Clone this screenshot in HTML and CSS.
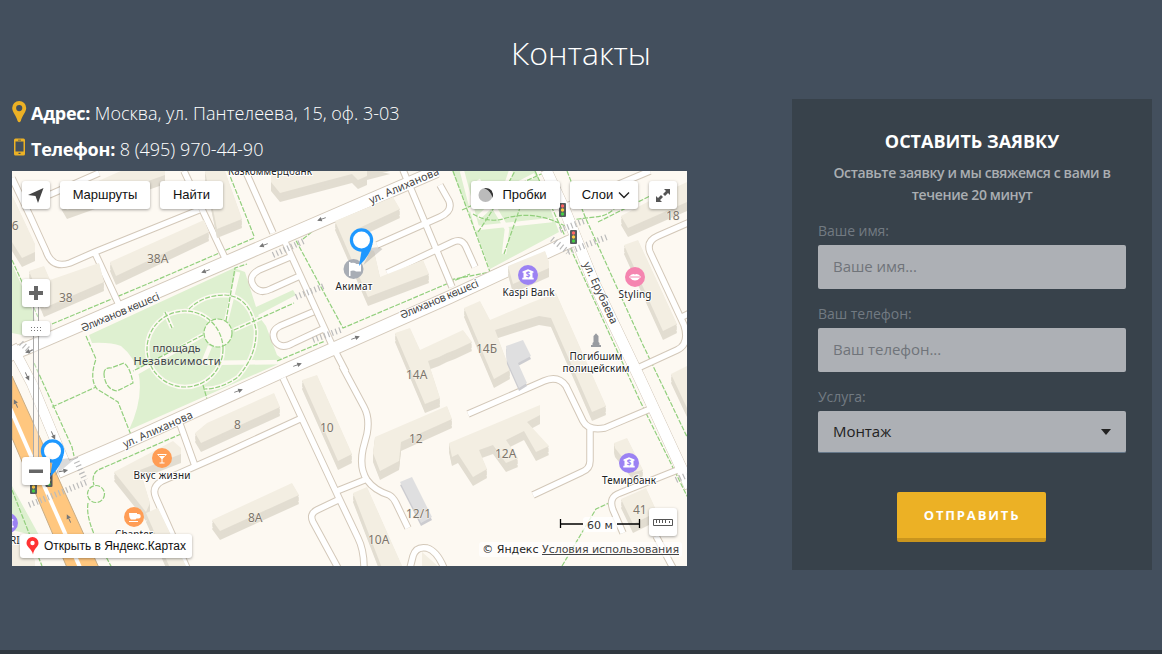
FILE: index.html
```html
<!DOCTYPE html>
<html lang="ru">
<head>
<meta charset="utf-8">
<title>Контакты</title>
<link rel="stylesheet" href="styles.css">
</head>
<body>
<section class="contacts">
  <h2 class="title">Контакты</h2>
  <div class="columns">
    <div class="info">
      <p class="line"><svg class="line-icon" viewBox="0 0 15 22" width="15" height="22"><path fill="#ecb125" fill-rule="evenodd" d="M7.200 0a7 7 0 0 1 7 7c0 4-4 7.500-5.400 13q-1.600 2.500-3.200 0C4.200 14.500.2 11 .2 7a7 7 0 0 1 7-7zm0 4a3.100 3.100 0 1 0 0 6.200 3.100 3.100 0 0 0 0-6.200z"/></svg><span><b>Адрес:</b> Москва, ул. Пантелеева, 15, оф. 3-03</span></p>
      <p class="line"><svg class="line-icon" viewBox="0 0 15 22" width="15" height="22"><path fill="#ecb125" fill-rule="evenodd" d="M3.500 1.500h8a1.500 1.500 0 0 1 1.500 1.500v14a1.500 1.500 0 0 1-1.500 1.500h-8A1.500 1.500 0 0 1 2 17V3A1.500 1.500 0 0 1 3.500 1.500zM3.500 4.500v10h8v-10zM6 2.800h3v.7H6zM6.500 15.700V17h2v-1.300z"/></svg><span><b>Телефон:</b> 8 (495) 970-44-90</span></p>
      <div class="map">
        <svg class="map-canvas" viewBox="12 171 675 395" width="675" height="395">
          <defs>
            <g id="bank"><circle r="10" fill="#9b82f3"/><path fill="#fff" d="M-5.500-3.500L0-5.800l5.500 2.300v1.300h-1v5h1.200v1.800H-5.700V2.800h1.200v-5h-1z"/><text y="3.200" class="dollar">$</text></g>
            <g id="light"><rect x="-3.500" y="-7" width="7" height="14" rx="1" fill="#555b5e"/><circle cy="-4" r="1.700" fill="#f66"/><circle r="1.700" fill="#fc4"/><circle cy="4" r="1.700" fill="#4c4"/></g>
            <g id="pin"><path d="M2 25L10 8q8-2 11 1z" fill="#555" opacity=".22"/><path d="M0 11L11 4Q9 15-2.500 26z" fill="#1e98ff"/><circle r="11.700" fill="#1e98ff"/><circle r="8.500" fill="#fff"/></g>
            <path id="arr" d="M4 0H-4M-4 0l3-1.500v3z" stroke="#777" fill="#777" stroke-width="1"/>
            <g id="roads">
              <path d="M12 178L31 218Q40 238 46 251Q52 269 70 263L95 252L199 210M49 195L99 173M184 171L225 258M95 253L120 307M245 170L273 233M285 242L333 347L346 372M403 170L452 287M377 245L440 217Q453 211 449 201L440 185M387 273L453 242Q462 238 466 247L475 267M290 257L259 270Q248 276 253 285Q259 295 271 289L302 275M313 312L280 326Q270 331 275 341Q281 350 293 343L325 328"/>
              <path d="M283 378L338 496L358 538Q364 550 364 568M342 366L364 407Q370 418 367 434L363 449Q359 468 367 480Q374 490 389 495Q393 497 396 503L408 528M302 418L230 451L162 481Q151 487 156 498L187 568M180 424L195 466M337 491L367 479M338 500L317 510Q309 514 313 522L338 568M410 568L413 556Q416 546 427 548Q437 551 444 568M468 414L544 381Q558 375 566 386L583 421Q588 431 605 428L650 409M590 429V461Q590 469 582 472L533 495M680 469L620 493Q608 497 613 510L623 533M656 536L673 568"/>
              <path d="M690 222L658 236Q646 241 650 252L684 325Q690 344 677 350L640 367M682 317L690 313M562 208L650 171"/>
            </g>
            <g id="main">
              <path d="M0 359L32 346L437 171M58 472L125 443L290 368L450 297L575 239" stroke-width="12"/>
              <path d="M546 170L566 213L594 283L640 379L690 487" stroke-width="11"/>
              <path d="M12 346L32 384L66 466" stroke-width="10"/>
            </g>
          </defs>
          <rect x="12" y="171" width="675" height="395" fill="#fdf9f2"/>
          <g fill="#def0d0">
            <path d="M89 335L234 268L245 272L256 307L293 290L296 295L258 315L266 326L277 355L285 361L129 430Q143 400 139 376Q135 357 121 346Q110 342 92 343z"/>
            <path d="M12 264L30 304Q42 332 27 336L12 333zM12 486L40 537L12 530zM452 171H536L559 232L490 269z"/>
          </g>
          <g class="path-wide"><path d="M203 335L134 374M234 330L294 303M226 321L238 272M165 312L172 328M210 346L203 363L285 362M466 211L535 175M462 171L477 228L552 220M478 180L507 229L504 254M511 171L503 195L478 218"/><circle cx="185" cy="349" r="38"/><path d="M189 309Q203 295 225 295Q250 296 256 330Q257 355 238 377Q221 389 205 389"/></g>
          <circle cx="218" cy="333" r="14" fill="#fdf9f2"/>
          <g class="path-dash">
            <path d="M12 355L145 298L270 242L293 232L437 169M12 260L38 317M52 324L145 285L254 238M228 171L254 236M293 235L343 328L470 274M303 239L324 222M34 363L72 447L74 456M52 407L96 387M86 336L96 359Q89 379 97 389L118 402L131 435M104 374Q104 367 111 368L124 363Q130 367 133 383L117 391Q105 389 104 374z"/>
            <path d="M203 335L133 371M234 330L294 303M226 321L235 268L247 264M165 312L172 328M277 361L325 341M203 385L207 399"/>
            <circle cx="218" cy="333" r="14"/><path d="M189 309Q203 295 225 295Q250 296 256 330Q257 355 238 377Q221 389 205 389"/><circle cx="185" cy="349" r="38"/><circle cx="96" cy="494" r="8.500"/>
            <path d="M181 434L98 470Q91 475 94 485M88 503Q86 515 94 534L112 568M453 171L490 272L450 280M535 171L569 245L640 401L690 502M567 171L586 219L643 345L690 443M462 210L550 170M473 214Q490 224 506 218Q535 210 565 226M478 232Q495 208 515 171M504 254L523 199M12 490L42 566M570 220L595 217Q610 216 617 205L623 188M562 566L596 509L609 503M598 222L650 196"/>
          </g>
          <use href="#roads" class="casing"/><use href="#main" class="main-casing"/><use href="#roads" class="road"/><use href="#main" class="main-road"/>
          <path d="M12 376L100 570H68L12 438z" fill="#ffc77f" stroke="#c9ad85"/>
          <path d="M10 408L82 572" stroke="#fff" stroke-width="4"/>
          <g class="buildings">
            <path d="M110 262L204 220L209 232L116 276zM29 271L44 266L50 280L99 263L104 282L44 308zM12 195L35 244V252L22 258L12 242zM60 198L150 158L165 171V175L67 210zM205 171H225L242 219L217 229L214 214zM271 182V165H390L367 171V176L358 180L352 174L280 193z"/>
            <path d="M335 221L393 197L400 209L357 229L364 248L374 251L380 277L423 260L429 274L368 297zM395 333L410 328L420 350L463 330L472 342L455 350L447 353L439 357L428 361L440 398L425 404zM464 308L480 301L490 320L530 303L556 293L606 406L592 412L551 318L539 316L495 330L510 370L494 379zM508 266L545 251L549 262V268L513 284z"/>
            <path d="M207 423L274 393L280 407L201 443L195 433zM302 380L317 375L352 454L338 461zM212 520L292 483L299 495L220 531zM353 493L367 487L403 568H382zM375 437L447 406L452 419L401 442L399 461L380 471L373 453zM449 443L540 405V415L527 422L549 446L536 452L524 431L506 440L518 458L506 463L493 445L479 450L487 469L473 477L458 454L452 457zM621 499L646 488L657 512L633 524zM621 216L670 190L687 182V202L628 228zM624 245L638 240L677 324L663 331zM671 374L687 366V408zM614 443L627 438L643 470L634 472L615 448z"/>
            <path d="M114 472L173 441L181 448V454L140 470L150 503L146 512zM146 513L158 508L187 568H170zM422 552L440 568H422zM12 532L35 560V568H12z"/>
          </g>
          <g class="grey-buildings"><path d="M506 346L523 340L531 356L518 363L527 383L519 388L507 361zM400 482L412 477L432 517L421 523z"/></g>
          <g class="zebra"><path d="M273 255L304 241M296 297L324 286M313 340L343 329M560 230L584 221M568 252L607 237M552 239L568 252M29 505L87 482M75 458L85 480M676 480L687 475M21 343L31 352"/></g>
          <g><use href="#arr" transform="translate(206 271) rotate(-20)"/><use href="#arr" transform="translate(264 245) rotate(-20)"/><use href="#arr" transform="translate(322 219) rotate(-20)"/><use href="#arr" transform="translate(355 338) rotate(160)"/><use href="#arr" transform="translate(297 365) rotate(160)"/><use href="#arr" transform="translate(238 391) rotate(160)"/><use href="#arr" transform="translate(30 351) rotate(-20)"/><use href="#arr" transform="translate(27 376) rotate(245)"/><use href="#arr" transform="translate(53 435) rotate(245)"/><use href="#arr" transform="translate(16 404) rotate(65)"/><use href="#arr" transform="translate(69 519) rotate(65)"/><use href="#arr" transform="translate(63 471) rotate(170)"/></g>
          <g class="street">
            <text transform="translate(83 332) rotate(-23)" textLength="84">Әлиханов көшесі</text>
            <text transform="translate(402 319) rotate(-23)" textLength="84">Әлиханов көшесі</text>
            <text transform="translate(371 204) rotate(-23.500)" textLength="75">ул. Алиханова</text>
            <text transform="translate(125 448) rotate(-24)" textLength="75">ул. Алиханова</text>
            <text transform="translate(583 264) rotate(65)" textLength="67">ул. Ерубаева</text>
          </g>
          <g class="house"><text x="147" y="263">38А</text><text x="59" y="302">38</text><text x="5" y="230">16</text><text x="406" y="379">14А</text><text x="476" y="353">14Б</text><text x="234" y="429">8</text><text x="320" y="432">10</text><text x="409" y="443">12</text><text x="495" y="458">12А</text><text x="248" y="522">8А</text><text x="368" y="544">10А</text><text x="406" y="518">12/1</text><text x="633" y="514">41</text><text x="666" y="220">18</text></g>
          <g class="poi">
            <text x="270" y="175" textLength="84">Казкоммерцбанк</text><text x="354" y="290" textLength="37">Акимат</text><text x="528.500" y="296" textLength="52">Kaspi Bank</text><text x="635" y="298" textLength="33">Styling</text><text x="596" y="360" textLength="53">Погибшим</text><text x="596" y="372" textLength="67">полицейским</text><text x="629" y="484" textLength="54">Темирбанк</text><text x="162" y="479" textLength="57">Вкус жизни</text><text x="134" y="538" textLength="38">Chapter</text><text x="12" y="544">ERI</text>
          </g>
          <g class="square"><text x="176.500" y="352" textLength="48">площадь</text><text x="177" y="364.500" textLength="87">Независимости</text></g>
          <use href="#bank" x="528" y="275"/><use href="#bank" x="629" y="463"/><use href="#bank" x="8" y="523"/>
          <use href="#light" x="562.500" y="210"/><use href="#light" x="573.500" y="237"/><use href="#light" x="33.500" y="487"/><use href="#light" x="49" y="480"/>
          <circle cx="635" cy="277" r="10" fill="#f585b0"/><path d="M629 277q3-4 6-2.500q3-1.500 6 2.500q-6 7-12 0z" fill="#fff"/><path d="M630 277h10" stroke="#f585b0"/>
          <circle cx="162" cy="458" r="10" fill="#ff9d55"/><path d="M157 454h10l-4.500 5v3.500h2v1h-5v-1h2V459z" fill="#fff"/><path d="M159 455.500h6" stroke="#ff9d55"/>
          <circle cx="134" cy="517" r="10" fill="#ff9d55"/><path d="M129 513h8v1h1.500a2 2 0 0 1 0 4.500h-2l-1 1h-4.500q-2-1.500-2-6.500zM129 521h9v1h-9z" fill="#fff"/>
          <path d="M595 334.500q1-2 2 0l1.500 1.500v6l1 1v2h-7v-2l1-1v-6zM591 345h10v2h-10z" fill="#999ca1"/>
          <circle cx="353.500" cy="269" r="10" fill="#a8adb5"/><path d="M349 262h1.500v1q4-1 6 1h4.500v7.500h-5q-2-1.500-5.500-.5v5H349z" fill="#fff"/>
          <use href="#pin" x="361.500" y="240"/><use href="#pin" x="52.500" y="451"/>
          <path class="scale-line" d="M560.500 519v9M560.500 524H583M617 524h22.500M639.500 519v9"/>
          <rect x="583" y="517" width="34" height="15" rx="3" fill="#fff" opacity=".8"/>
          <text class="scale-text" x="600" y="529">60 м</text>
        </svg>
        <button class="ctl locate"><svg width="28" height="28"><path d="M6 14L21.500 7 16 22l-2.500-7z" fill="#444"/></svg></button>
        <button class="ctl routes">Маршруты</button>
        <button class="ctl find">Найти</button>
        <button class="ctl traffic"><svg width="17" height="16"><circle cx="8.500" cy="8" r="7" fill="#bbb"/><path d="M7 1Q17 0 16 11L14 7Q12 3 7 1z" fill="#333"/></svg>Пробки</button>
        <button class="ctl layers">Слои<svg width="12" height="8"><path d="M1 1.500l5 5 5-5" fill="none" stroke="#222" stroke-width="1.400"/></svg></button>
        <button class="ctl full"><svg width="28" height="28"><path d="M15 8h6v6l-2-2-3 3-2-2 3-3zM7 15l2 2 3-3 2 2-3 3 2 2H7z" fill="#555"/></svg></button>
        <div class="track"></div>
        <button class="ctl plus"><svg width="28" height="28"><path d="M12 7h4v5h5v4h-5v5h-4v-5H7v-4h5z" fill="#666"/></svg></button>
        <div class="ctl handle"><svg width="28" height="15"><path d="M9 6.500h12M9 9.500h12" stroke="#777" stroke-dasharray="1 2"/></svg></div>
        <button class="ctl minus"><svg width="28" height="28"><path d="M7 12.500h14v3.500H7z" fill="#666"/></svg></button>
        <button class="ctl ruler"><svg width="28" height="28"><path d="M4.500 11.500h19v6h-19zM7.500 12v3M10.500 12v3M13.500 12v3M16.500 12v3M20.500 13v2" fill="none" stroke="#555"/></svg></button>
        <button class="ctl open"><svg width="13" height="19"><path d="M6.500 1a6 6 0 0 1 6 6c0 4-4.500 5-5.500 11.500C6 13 .5 11 .5 7a6 6 0 0 1 6-6z" fill="#f33"/><circle cx="6.500" cy="7" r="2.200" fill="#fff"/></svg>Открыть в Яндекс.Картах</button>
        <div class="copyright">© Яндекс <a>Условия использования</a></div>
      </div>
    </div>
    <form class="panel">
      <h3 class="panel-title">ОСТАВИТЬ ЗАЯВКУ</h3>
      <p class="panel-sub">Оставьте заявку и мы свяжемся с вами в течение 20 минут</p>
      <label class="label">Ваше имя:</label>
      <div class="field">Ваше имя...</div>
      <label class="label">Ваш телефон:</label>
      <div class="field">Ваш телефон...</div>
      <label class="label">Услуга:</label>
      <div class="field select">Монтаж<svg width="10" height="6"><path d="M0 0h10L5 6z" fill="#222"/></svg></div>
      <button class="submit" type="button">ОТПРАВИТЬ</button>
    </form>
  </div>
</section>
</body>
</html>
```
FILE: styles.css
```css
* { box-sizing: border-box; }
body { margin: 0; background: #434f5d; font-family: "Open Sans", sans-serif; color: #fff; }
.contacts { height: 654px; padding-top: 30px; border-bottom: 4px solid #2f373f; overflow: hidden; }
.title { margin: 0; height: 69px; text-align: center; font-size: 32px; line-height: 46px; font-weight: 300; }
.columns { display: flex; justify-content: space-between; align-items: flex-start; padding: 0 10px 0 12px; }
.info { width: 675px; }
.line { margin: 0; height: 36px; display: flex; gap: 4px; align-items: flex-start; font-size: 18px; line-height: 28px; font-weight: 300; white-space: nowrap; }
.line b { font-weight: 700; letter-spacing: -.27px; }
.line-icon { margin-top: 2px; }
.map { position: relative; width: 675px; height: 395px; overflow: hidden; }
.map-canvas { display: block; font-family: "Noto Sans", sans-serif; }
.map-canvas text { paint-order: stroke; stroke: #fff; stroke-width: 2px; stroke-linejoin: round; }
.casing, .road, .main-casing, .main-road { fill: none; }
.casing { stroke: #d3c8b9; stroke-width: 7.500px; }
.road { stroke: #fff; stroke-width: 5.500px; }
.main-casing { stroke: #d3c8b9; }
.main-casing, .main-road { stroke-linejoin: round; }
#main { fill: none; }
.main-casing { filter: drop-shadow(0 1px 0 #d3c8b9) drop-shadow(0 -1px 0 #d3c8b9); }
.main-road { stroke: #fff; }
.path-wide { fill: none; stroke: #fdf9f2; stroke-width: 4.500px; }
.path-dash { fill: none; stroke: #92cf7d; stroke-width: 1.200px; stroke-dasharray: 5 1.500; }
.buildings { fill: #f3eee2; filter: drop-shadow(0 1px 0 #e2ddd1) drop-shadow(0 3px 0 #e2ddd1) drop-shadow(0 5px 0 #e2ddd1); }
.grey-buildings { fill: #dfdfe0; filter: drop-shadow(0 3px 0 #ccccd0); }
.zebra { fill: none; stroke: #bbb; stroke-width: 6px; stroke-dasharray: 1.200 2.800; }
.street { font-size: 11px; fill: #444; }
.house { font-size: 12px; fill: #7c756b; }
.map-canvas .house text { stroke: #f8f3e9; stroke-width: 1px; }
.poi { font-size: 10px; fill: #222; text-anchor: middle; }
.square { font-size: 11px; fill: #3c4244; text-anchor: middle; }
.map-canvas .square text { stroke: #eff6e7; stroke-width: 1px; }
.map-canvas .dollar { font-size: 8px; font-weight: 700; fill: #9b82f3; text-anchor: middle; stroke: none; }
.scale-line { fill: none; stroke: #000; stroke-width: 1.300px; }
.scale-text { font: 11px "DejaVu Sans", sans-serif; text-anchor: middle; fill: #333; }
.ctl { position: absolute; height: 28px; display: flex; align-items: center; justify-content: center; padding: 0 0 1px; border: 0; border-radius: 3px; background: #fff; color: #111; font: 13px "Liberation Sans", sans-serif; white-space: nowrap; box-shadow: 0 1px 3px rgba(0,0,0,.35); }
.locate { left: 10px; top: 10px; width: 28px; }
.routes { left: 48px; top: 10px; width: 90px; }
.find { left: 148px; top: 10px; width: 63px; }
.traffic { left: 459px; top: 10px; width: 89px; gap: 8px; padding-right: 7px; }
.layers { left: 558px; top: 10px; width: 68px; gap: 5px; padding-left: 4px; }
.full { left: 637px; top: 10px; width: 28px; }
.track { position: absolute; left: 21px; top: 125px; width: 6px; height: 165px; border: 1px solid #aaa; background: rgba(255,255,255,.4); }
.plus { left: 10px; top: 108px; width: 28px; padding: 0; }
.handle { left: 10px; top: 150px; width: 28px; height: 15px; padding: 0; }
.minus { left: 10px; top: 286px; width: 28px; padding: 0; }
.ruler { left: 637px; top: 337px; width: 28px; padding: 0; }
.open { left: 8px; top: 363px; width: 172px; height: 24px; font-size: 12px; gap: 5px; }
.copyright { position: absolute; right: 5px; bottom: 9px; padding: 0 3px; border-radius: 3px; background: rgba(255,255,255,.7); color: #222; font: 11px/15px "DejaVu Sans", sans-serif; letter-spacing: -.03px; white-space: nowrap; }
.copyright a { color: #444; text-decoration: underline; }
.panel { width: 360px; height: 471px; padding: 29px 26px 0; background: #38424b; display: flex; flex-direction: column; }
.panel-title { margin: 0; font-size: 18px; line-height: 26px; font-weight: 700; text-align: center; }
.panel-sub { margin: 8px 0 14px; font-size: 14px; line-height: 22px; font-weight: 600; text-align: center; color: #aaaeb2; letter-spacing: -.37px; }
.label { height: 22px; margin-bottom: 3px; font-size: 14px; line-height: 22px; color: #727a82; letter-spacing: -.05px; }
.field { height: 44px; margin-bottom: 14px; padding: 0 15px; border-radius: 2px; background: #adb0b5; color: #70747a; font-size: 15px; line-height: 42px; letter-spacing: -.05px; }
.select { display: flex; align-items: center; justify-content: space-between; height: 42px; margin-bottom: 39px; color: #222; line-height: 41px; border-bottom: 1px solid #66788a; }
.submit { align-self: center; width: 149px; height: 50px; margin-right: 2px; padding: 0 0 0 2px; border: 0; border-bottom: 4px solid #c9951e; border-radius: 2px; background: #ecb125; color: #fff; font: 700 13px "Open Sans", sans-serif; letter-spacing: 1.850px; }
```
